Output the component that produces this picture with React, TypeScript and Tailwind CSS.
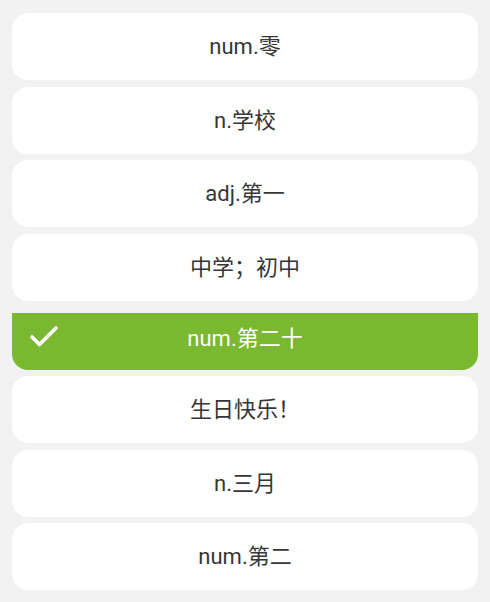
import React from "react";
import { Check } from "lucide-react";

const options: string[] = [
  "num.零",
  "n.学校",
  "adj.第一",
  "中学；初中",
  "num.第二十",
  "生日快乐！",
  "n.三月",
  "num.第二",
];

const selected = 4;

export default function App() {
  return (
    <div
      className="w-[490px] h-[602px] bg-[#f1f1f1] px-[12px] pt-[13px] flex flex-col gap-[6.5px] overflow-hidden"
      style={{ fontFamily: "Roboto, 'Noto Sans CJK SC', sans-serif" }}
    >
      {options.map((text, i) =>
        i === selected ? (
          <div
            key={text}
            className="relative mt-[6px] h-[56.5px] shrink-0 rounded-b-[16px] bg-[#7ab82f] flex items-center justify-center pb-[6px] text-[22px] text-white"
          >
            <Check
              size={36}
              strokeWidth={2.5}
              className="absolute left-[14px] top-[6px] text-white"
            />
            {text}
          </div>
        ) : (
          <div
            key={text}
            className="h-[67px] shrink-0 rounded-[16px] bg-white flex items-center justify-center text-[22px] text-[#363636]"
          >
            {text}
          </div>
        )
      )}
    </div>
  );
}
